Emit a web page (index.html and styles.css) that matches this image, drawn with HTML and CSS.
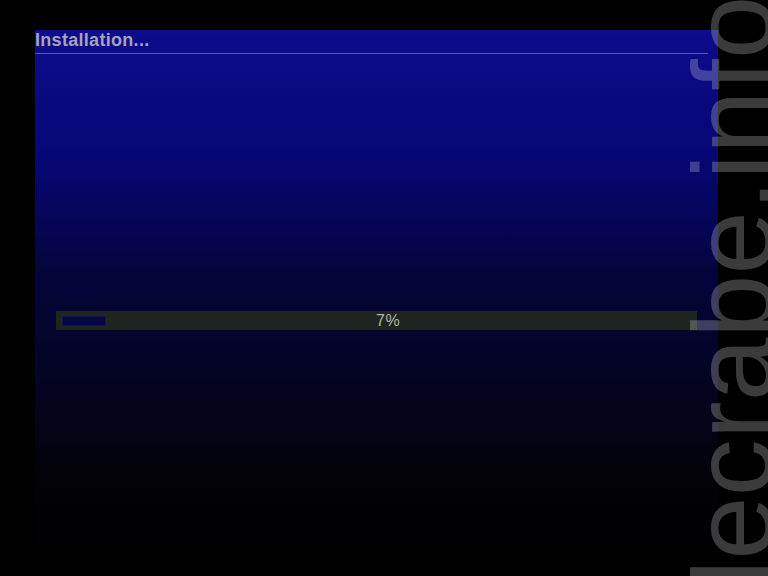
FILE: index.html
```html
<!DOCTYPE html>
<html lang="fr">
<head>
<meta charset="utf-8">
<title>Installation</title>
<link rel="stylesheet" href="styles.css">
</head>
<body>
<div class="screen">
  <div class="panel">
    <div class="title">Installation...</div>
    <div class="progress">
      <div class="fill"></div>
      <div class="label">7%</div>
    </div>
  </div>
  <div class="watermark">lecrabe.info</div>
</div>
</body>
</html>
```
FILE: styles.css
```css
html, body {
  margin: 0;
  padding: 0;
  width: 768px;
  height: 576px;
  overflow: hidden;
  background: #000;
}
.screen {
  position: relative;
  width: 768px;
  height: 576px;
  overflow: hidden;
  background: #000;
  padding-top: 30px;
  box-sizing: border-box;
}
.panel {
  margin-left: 35px;
  width: 683px;
  height: 546px;
  display: flex;
  flex-direction: column;
  background: linear-gradient(to bottom,
    #0c0c8c 0%,
    #09097f 13%,
    #060670 25.6%,
    #05054a 40%,
    #04043c 44%,
    #04041e 67.8%,
    #020208 80.6%,
    #000000 100%);
}
.title {
  width: 673px;
  font-family: "Liberation Sans", Arial, sans-serif;
  font-weight: bold;
  font-size: 18px;
  line-height: 20px;
  letter-spacing: 0.3px;
  color: #a4a4bc;
  padding-bottom: 3px;
  border-bottom: 1px solid #5a5aa4;
}
.progress {
  margin-top: 257px;
  margin-left: 21px;
  width: 641px;
  height: 19px;
  background: #202420;
  display: flex;
  align-items: center;
  position: relative;
}
.fill {
  margin-left: 6px;
  width: 42px;
  height: 8px;
  background: #05054a;
  border: 1px solid #15154c;
}
.label {
  position: absolute;
  left: 320px;
  top: 0;
  height: 19px;
  line-height: 19px;
  font-family: "Liberation Sans", Arial, sans-serif;
  font-size: 16px;
  color: #b4b4b4;
  letter-spacing: 0.5px;
}
.watermark {
  position: absolute;
  left: 676px;
  top: 585px;
  transform-origin: 0 0;
  transform: rotate(-90deg);
  font-family: "Liberation Sans", Arial, sans-serif;
  font-size: 114px;
  line-height: 1;
  white-space: nowrap;
  color: rgba(255, 255, 255, 0.23);
}
```
